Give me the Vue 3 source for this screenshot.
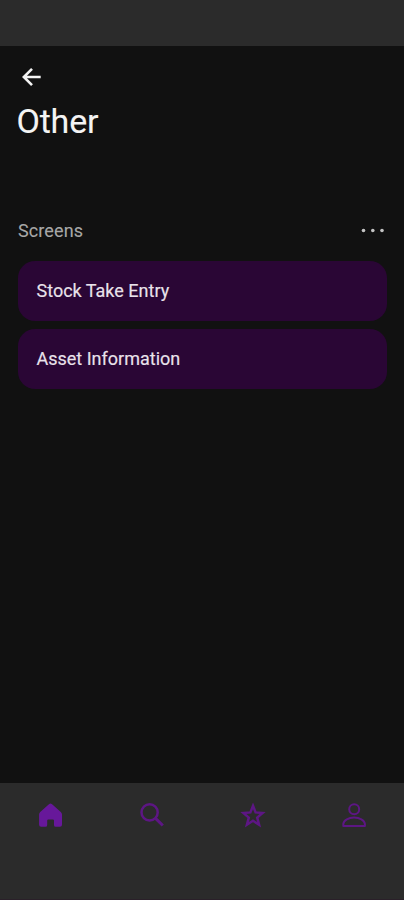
<script setup>
const screens = ['Stock Take Entry', 'Asset Information']
</script>

<template>
  <div class="app">
    <div class="status"></div>
    <main class="content">
      <button class="back" aria-label="Back">
        <svg width="20" height="20" viewBox="0 0 20 20">
          <path d="M18.7 10H2.2M10 1.8L1.8 10l8.2 8.2" />
        </svg>
      </button>
      <h1>Other</h1>
      <div class="section">
        <h2>Screens</h2>
        <svg class="more" width="24" height="6" viewBox="0 0 24 6">
          <circle cx="2.5" cy="2.5" r="1.8" />
          <circle cx="11.8" cy="2.5" r="1.8" />
          <circle cx="21" cy="2.5" r="1.8" />
        </svg>
      </div>
      <div class="list">
        <div v-for="name in screens" :key="name" class="card">{{ name }}</div>
      </div>
    </main>
    <nav class="nav">
      <div class="tab">
        <svg width="26" height="26" viewBox="0 0 26 26">
          <path class="solid" d="M11.2 2Q12.5 1 13.8 2L22.8 10Q24 11.1 24 12.5V22.8Q24 24.8 22 24.8H17.8Q16 24.8 16 22.9V18.6Q16 17.4 14.8 17.4H10.4Q9.2 17.4 9.2 18.6V22.9Q9.2 24.8 7.4 24.8H3.1Q1.1 24.8 1.1 22.8V12.5Q1.1 11.1 2.2 10Z" />
        </svg>
      </div>
      <div class="tab">
        <svg width="26" height="26" viewBox="0 0 26 26">
          <circle cx="10.6" cy="10.4" r="8.1" />
          <path class="handle" d="M16.6 16.4L23.8 23.5" />
        </svg>
      </div>
      <div class="tab">
        <svg width="26" height="26" viewBox="0 0 26 26">
          <path d="M13 3.8L15.6 10.4L22.6 11L17.2 15.6L19.1 22.7L13 18.8L6.9 22.7L8.8 15.6L3.4 11L10.4 10.4Z" />
        </svg>
      </div>
      <div class="tab">
        <svg class="thin" width="26" height="26" viewBox="0 0 26 26">
          <circle cx="13.2" cy="7.3" r="5" />
          <path d="M2.3 23.9V21.8C2.8 18 7.6 15.6 13.1 15.6S23.4 18 23.9 21.8V23.9Z" />
        </svg>
      </div>
    </nav>
  </div>
</template>

<style>
body {
  background: #111111;
}
</style>

<style scoped>
.app {
  display: flex;
  flex-direction: column;
  box-sizing: border-box;
  height: 900px;
  background: #111111;
  font-family: Roboto, sans-serif;
  border-bottom: 1px solid #2a2029;
}
.status {
  height: 46px;
  background: #2b2b2b;
  flex: none;
}
.content {
  flex: 1;
  padding: 21px 17px 0 18px;
}
.back {
  display: block;
  margin: 0 0 0 4px;
  padding: 0;
  border: 0;
  background: none;
  height: 20px;
}
.back svg {
  display: block;
  fill: none;
  stroke: #f4f4f4;
  stroke-width: 2.6;
}
h1 {
  margin: 14px 0 0 -1.5px;
  font-size: 34px;
  line-height: 40px;
  font-weight: 400;
  letter-spacing: -0.2px;
  color: #f4f4f4;
  -webkit-text-stroke: 0.1px #f4f4f4;
}
.section {
  display: flex;
  align-items: center;
  justify-content: space-between;
  margin-top: 79px;
  height: 22px;
}
h2 {
  margin: 0;
  font-size: 18px;
  line-height: 22px;
  font-weight: 400;
  letter-spacing: 0.1px;
  color: #a8a8a8;
  -webkit-text-stroke: 0.1px #a8a8a8;
}
.more {
  fill: #c4c4c4;
  margin-right: 2px;
}
.list {
  display: flex;
  flex-direction: column;
  gap: 8.5px;
  margin-top: 19px;
}
.card {
  display: flex;
  align-items: center;
  box-sizing: border-box;
  height: 59.5px;
  padding: 0 18px 1px 18.5px;
  border-radius: 17px;
  background: #2a0635;
  color: #e9e2eb;
  font-size: 18px;
  font-weight: 400;
  -webkit-text-stroke: 0.15px #e9e2eb;
}
.nav {
  display: flex;
  flex: none;
  box-sizing: border-box;
  height: 116px;
  padding-top: 19px;
  background: #2b2b2b;
}
.tab {
  flex: 1;
  display: flex;
  justify-content: center;
}
.tab svg {
  display: block;
  fill: none;
  stroke: #5d1684;
  stroke-width: 2.5;
}
.tab .handle {
  stroke-width: 3;
}
.tab .thin {
  stroke-width: 2;
  stroke-linejoin: round;
}
.tab .solid {
  fill: #67189a;
  stroke: none;
}
</style>
